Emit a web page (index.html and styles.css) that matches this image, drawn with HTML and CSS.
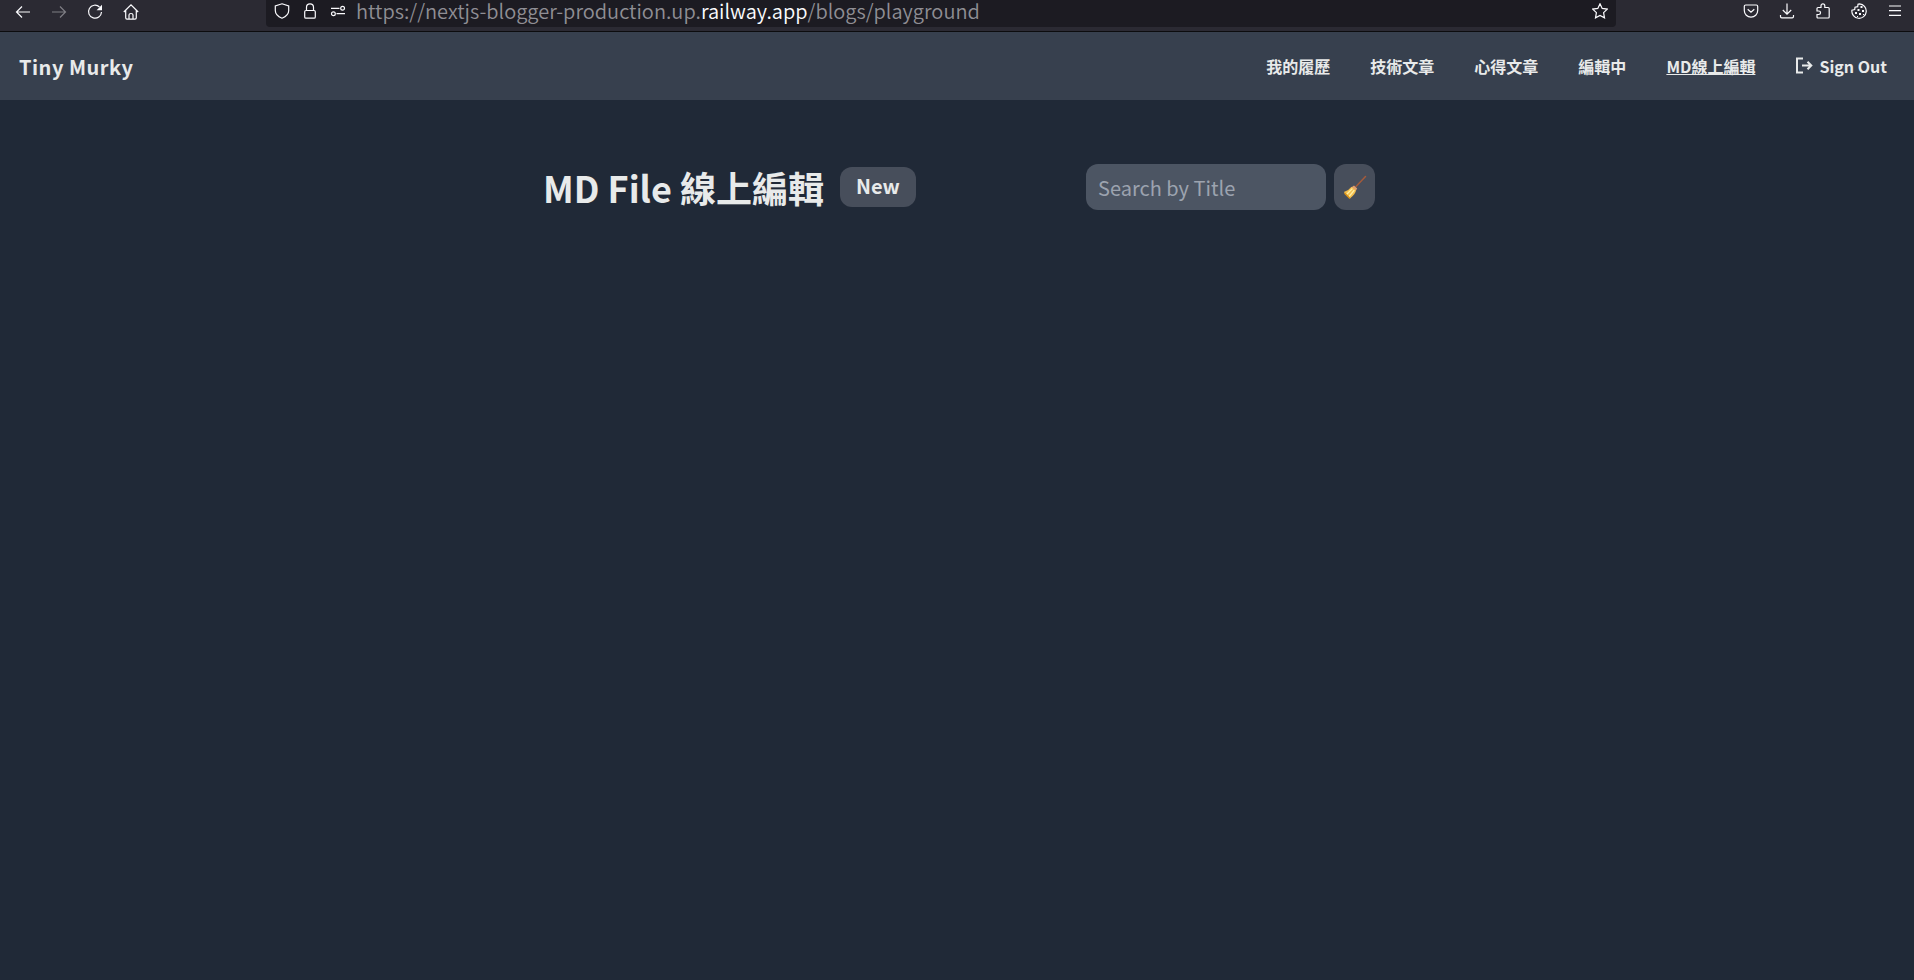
FILE: index.html
```html
<!DOCTYPE html>
<html lang="zh-Hant">
<head>
<meta charset="utf-8">
<title>MD File 線上編輯</title>
<link rel="stylesheet" href="styles.css">
</head>
<body>
<div class="toolbar">
  <div class="toolbar-nav">
    <button class="tool" aria-label="Back"><svg viewBox="0 0 16 16"><path d="M15 8H1.5M7 2.5 1.5 8 7 13.5"/></svg></button>
    <button class="tool dim" aria-label="Forward"><svg viewBox="0 0 16 16"><path d="M1 8h13.500M9 2.500 14.500 8 9 13.500"/></svg></button>
    <button class="tool" aria-label="Reload"><svg viewBox="0 0 16 16"><path d="M12.500 3A6.500 6.500 0 1 0 14.500 8"/><path class="solid" d="M15 .8v5.400H9.600z"/></svg></button>
    <button class="tool" aria-label="Home"><svg viewBox="0 0 16 16"><path d="M.8 8 8 .9 15.200 8M2.700 6.500v7.300q0 1.300 1.300 1.300h8q1.300 0 1.300-1.300V6.500M6 15v-4q0-1.500 2-1.500t2 1.500v4"/></svg></button>
  </div>
  <div class="address">
    <div class="address-icons">
      <svg viewBox="0 0 16 16"><path d="M8 .8 14.700 3v4.500c0 3.700-3 6.200-6.700 7.700C4.300 13.700 1.300 11.200 1.300 7.500V3z"/></svg>
      <svg viewBox="0 0 16 16"><rect x="2.700" y="7.500" width="10.600" height="7.700" rx="1.300"/><path d="M4.500 7.500V4.300a3.500 3.500 0 0 1 7 0v3.200"/></svg>
      <svg viewBox="0 0 16 16"><path d="M1 5.300h8.500M6.500 10.700H15"/><circle cx="12.600" cy="5.300" r="1.900"/><circle cx="3.400" cy="10.700" r="1.900"/></svg>
    </div>
    <div class="url">https://nextjs-blogger-production.up.<span class="host">railway.app</span>/blogs/playground</div>
    <button class="tool" aria-label="Bookmark this page"><svg viewBox="0 0 16 16"><path d="m8 .8 2.200 4.600 5 .7-3.600 3.500.9 5.200L8 12.400l-4.500 2.400.9-5.200L.8 6.100l5-.7z"/></svg></button>
  </div>
  <div class="toolbar-actions">
    <button class="tool" aria-label="Save to Pocket"><svg viewBox="0 0 16 16"><path d="M2.700 2h10.600q1.400 0 1.400 1.400V7.500a6.700 6.700 0 0 1-13.400 0V3.400Q1.300 2 2.700 2zM4.700 6.200 8 9.300l3.300-3.100"/></svg></button>
    <button class="tool" aria-label="Downloads"><svg viewBox="0 0 16 16"><path d="M8 .5v10.500M3.800 7 8 11.200 12.200 7M1.500 12v1.500q0 1.300 1.300 1.300h10.400q1.300 0 1.300-1.300V12"/></svg></button>
    <button class="tool" aria-label="Extensions"><svg viewBox="0 0 16 16"><path d="M2 5.500q0-1 1-1h3V2.700a1.900 1.900 0 0 1 3.800 0v1.800h3.400q1 0 1 1V14q0 1-1 1H3q-1 0-1-1v-2.500h1.800a1.700 1.700 0 0 0 0-3.500H2z"/></svg></button>
    <button class="tool" aria-label="Cookies"><svg viewBox="0 0 16 16"><path d="M8.500.9a7.200 7.200 0 1 1-7.600 6.300L3.700 6.500l.3-2.300 2.700-.5.300-2.500z"/><path class="solid" d="M9.500 3h2v2h-2zM6.500 6h2v2h-2zM11 7h2v2h-2zM4 9h2v2H4zM8 10h2v2H8zM12 11h1v1h-1zM6 13h1v1H6z"/></svg></button>
    <button class="tool" aria-label="Menu"><svg viewBox="0 0 16 16"><path d="M2 3h12M2 7.700h12M2 12.400h12"/></svg></button>
  </div>
</div>

<header class="site-header">
  <a class="brand" href="#">Tiny Murky</a>
  <nav class="site-nav">
    <a href="#">我的履歷</a>
    <a href="#">技術文章</a>
    <a href="#">心得文章</a>
    <a href="#">編輯中</a>
    <a class="current" href="#" aria-current="page">MD線上編輯</a>
    <button class="sign-out"><svg viewBox="0 0 18 18"><path d="M8 1.500H2v14h6M7 8.500h9.500M12.500 4.700l3.800 3.800-3.800 3.800"/></svg>Sign Out</button>
  </nav>
</header>

<main class="content">
  <h1>MD File 線上編輯</h1>
  <button class="chip new">New</button>
  <form class="search">
    <input type="text" placeholder="Search by Title" aria-label="Search by Title">
    <button class="chip clear" type="button" aria-label="Clear search">
      <svg viewBox="0 0 24 24"><path d="M22.500 1.500 13 11.500" stroke="#a35a3b" stroke-width="1.500"/><path d="m11 10.500 3.200 3-1.500 2.500-4.500-3.500z" fill="#e0a070"/><path d="M8.500 11.700 13 15.500q-.5 3.500-6 8L.8 17q5-1.500 7.700-5.300z" fill="#f3bd4c"/><path d="m9 14-5 5m7-3.500-4.500 5.500" stroke="#fff0a5" stroke-width="1.300"/><path d="m2 18.500 4.500 4.500" stroke="#dc9418" stroke-width="1.500"/></svg>
    </button>
  </form>
</main>
</body>
</html>
```
FILE: styles.css
```css
* {
  box-sizing: border-box;
}

body {
  margin: 0;
  min-height: 100vh;
  background: #202937;
  color: #e8eaea;
  font-family: "Noto Sans CJK TC", "Noto Sans", sans-serif;
  font-size: 16px;
}

button,
input {
  margin: 0;
  padding: 0;
  border: 0;
  background: none;
  color: inherit;
  font: inherit;
}

a {
  color: inherit;
  text-decoration: none;
}

svg {
  display: block;
  fill: none;
  stroke: currentColor;
}

.toolbar {
  display: flex;
  align-items: flex-start;
  height: 32px;
  border-bottom: 1px solid #0c0c0e;
  background: #2b2a33;
  color: #fbfbfe;
}

.toolbar svg {
  width: 16px;
  height: 16px;
  stroke-width: 1.2;
}

.toolbar .solid {
  fill: currentColor;
  stroke: none;
}

.toolbar-nav {
  display: flex;
  flex: none;
  gap: 20px;
  width: 266px;
  padding: 4px 0 0 15px;
}

.dim {
  opacity: 0.4;
}

.address {
  display: flex;
  flex: 1;
  align-items: flex-start;
  height: 27px;
  padding: 3px 8px 0;
  border-radius: 0 0 4px 4px;
  background: #1c1b22;
}

.address-icons {
  display: flex;
  gap: 12px;
}

.url {
  flex: 1;
  margin-left: 10px;
  color: #8f8e94;
  font-size: 20px;
  font-weight: 350;
  line-height: 16px;
  white-space: nowrap;
}

.host {
  color: #fbfbfe;
}

.toolbar-actions {
  display: flex;
  flex: none;
  justify-content: flex-end;
  gap: 20px;
  width: 298px;
  padding: 3px 11px 0 0;
}

.site-header {
  display: flex;
  align-items: center;
  justify-content: space-between;
  height: 68px;
  padding: 0 27px 0 19px;
  background: #37404e;
}

.brand {
  font-size: 20px;
  font-weight: 700;
  letter-spacing: 0.5px;
}

.site-nav {
  display: flex;
  align-items: center;
  gap: 40px;
  font-weight: 700;
}

.current {
  text-decoration: underline;
}

.sign-out {
  display: flex;
  align-items: center;
  gap: 6px;
}

.sign-out svg {
  width: 18px;
  height: 18px;
  stroke-width: 2;
}

.content {
  display: flex;
  align-items: center;
  max-width: 836px;
  margin: 0 auto;
  padding: 60px 0 0 4px;
}

h1 {
  margin: 0;
  font-size: 36px;
  font-weight: 700;
  line-height: 54px;
}

.chip {
  border-radius: 12px;
  background: #474e5b;
}

.new {
  height: 40px;
  margin-left: 16px;
  padding: 0 16px 2px;
  font-size: 20px;
  font-weight: 700;
  line-height: 38px;
}

.search {
  display: flex;
  gap: 8px;
  margin-left: auto;
}

.search input {
  width: 240px;
  height: 46px;
  padding: 0 12px;
  border-radius: 12px;
  background: #4c5563;
  font-size: 20px;
}

.search input::placeholder {
  color: #9ca3af;
  opacity: 1;
}

.clear {
  display: grid;
  place-items: center;
  width: 41px;
}

.clear svg {
  width: 24px;
  height: 24px;
}

.clear path {
  stroke-linecap: round;
}

.clear path[fill] {
  stroke: none;
}
```
